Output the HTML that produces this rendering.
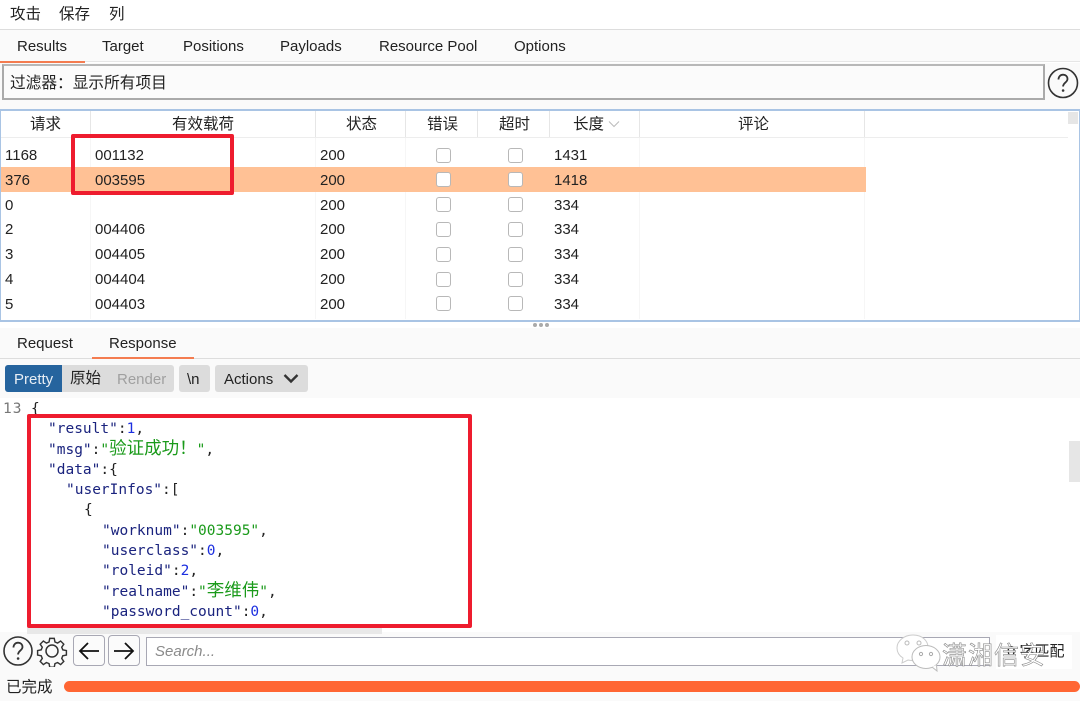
<!DOCTYPE html>
<html><head><meta charset="utf-8">
<style>
html,body{margin:0;padding:0;background:#fff}
#p{position:relative;width:1080px;height:701px;overflow:hidden;background:#fff;font-family:"Liberation Sans","Noto Sans CJK SC",sans-serif;font-size:15px;color:#222}
#p div{position:absolute}
.t{white-space:nowrap;line-height:20px;height:20px;margin-top:1px}
.h{font-size:15.5px}
.cb{width:13px;height:13px;border:1.5px solid #b8b8b8;border-radius:3px;background:#fff}
.sep{width:1px;background:#e6e6e6;top:111px;height:26px}
.sb{width:1px;background:#f6f6f6;top:138px;height:181px}
.c{font-family:"DejaVu Sans Mono","Noto Sans CJK SC",monospace;font-size:14.5px;line-height:20px;white-space:pre;color:#222}
.k{color:#1a237e}.n{color:#1c2fe0}.s{color:#1a9a1a}
.w{font-family:"Noto Sans CJK SC",sans-serif;font-size:17.5px;line-height:20px}
</style></head><body><div id="p">

<!-- menu -->
<div class="t h" style="left:10px;top:4px">攻击</div>
<div class="t h" style="left:59px;top:4px">保存</div>
<div class="t h" style="left:109px;top:4px">列</div>

<!-- tab bar -->
<div style="left:0;top:29px;width:1080px;height:32px;background:#fafafa;border-top:1px solid #ddd"></div>
<div style="left:85px;top:61px;width:995px;height:1px;background:#e6e6e6"></div>
<div style="left:0;top:61px;width:85px;height:2px;background:#f47c50"></div>
<div class="t" style="left:17px;top:36px">Results</div>
<div class="t" style="left:102px;top:36px">Target</div>
<div class="t" style="left:183px;top:36px">Positions</div>
<div class="t" style="left:280px;top:36px">Payloads</div>
<div class="t" style="left:379px;top:36px">Resource Pool</div>
<div class="t" style="left:514px;top:36px">Options</div>

<!-- filter -->
<div style="left:0;top:63px;width:1080px;height:46px;background:#fafafa"></div>
<div style="left:2px;top:64px;width:1043px;height:36px;box-sizing:border-box;border:2px solid #aaa;border-top-color:#b8b8b8;background:#fbfbfb"></div>
<div class="t" style="left:10px;top:73px;font-size:15.7px">过滤器：显示所有项目</div>
<svg style="position:absolute;left:1047px;top:67px" width="32" height="32" viewBox="0 0 32 32"><circle cx="16" cy="16" r="14.5" fill="none" stroke="#333" stroke-width="1.6"/><path d="M11.5 12.500c0-3 2-4.800 4.600-4.800s4.400 1.800 4.400 4.200c0 3.600-4.400 3.800-4.400 7.600" fill="none" stroke="#333" stroke-width="1.800"/><circle cx="16.100" cy="23.500" r="1.300" fill="#333"/></svg>

<!-- table -->
<div style="left:0;top:109px;width:1080px;height:213px;box-sizing:border-box;border:solid #a9c4e4;border-width:2px 1px 2px 1px;background:#fff"></div>
<div style="left:1068px;top:112px;width:10px;height:12px;background:#e6e6e6"></div>
<div style="left:1px;top:137px;width:1067px;height:1px;background:#ededed"></div>
<div class="sep" style="left:90px"></div>
<div class="sep" style="left:315px"></div>
<div class="sep" style="left:405px"></div>
<div class="sep" style="left:477px"></div>
<div class="sep" style="left:549px"></div>
<div class="sep" style="left:639px"></div>
<div class="sep" style="left:864px"></div>
<div class="sb" style="left:90px"></div>
<div class="sb" style="left:315px"></div>
<div class="sb" style="left:405px"></div>
<div class="sb" style="left:639px"></div>
<div class="sb" style="left:864px"></div>
<div style="left:1px;top:167px;width:865px;height:25px;background:#ffc195"></div>

<div class="t h" style="left:30px;top:114px">请求</div>
<div class="t h" style="left:172px;top:114px">有效载荷</div>
<div class="t h" style="left:346px;top:114px">状态</div>
<div class="t h" style="left:427px;top:114px">错误</div>
<div class="t h" style="left:499px;top:114px">超时</div>
<div class="t h" style="left:573px;top:114px">长度</div>
<svg style="position:absolute;left:608px;top:120px" width="12" height="8" viewBox="0 0 12 8"><path d="M1 1.500l5 5 5-5" fill="none" stroke="#bbb" stroke-width="1"/></svg>
<div class="t h" style="left:738px;top:114px">评论</div>

<!-- row 1 -->
<div class="t" style="left:5px;top:145px">1168</div><div class="t" style="left:95px;top:145px">001132</div><div class="t" style="left:320px;top:145px">200</div><div class="cb" style="left:436px;top:148px"></div><div class="cb" style="left:508px;top:148px"></div><div class="t" style="left:554px;top:145px">1431</div>
<!-- row 2 -->
<div class="t" style="left:5px;top:170px">376</div><div class="t" style="left:95px;top:170px">003595</div><div class="t" style="left:320px;top:170px">200</div><div class="cb" style="left:436px;top:172px"></div><div class="cb" style="left:508px;top:172px"></div><div class="t" style="left:554px;top:170px">1418</div>
<!-- row 3 -->
<div class="t" style="left:5px;top:195px">0</div><div class="t" style="left:320px;top:195px">200</div><div class="cb" style="left:436px;top:197px"></div><div class="cb" style="left:508px;top:197px"></div><div class="t" style="left:554px;top:195px">334</div>
<!-- row 4 -->
<div class="t" style="left:5px;top:219px">2</div><div class="t" style="left:95px;top:219px">004406</div><div class="t" style="left:320px;top:219px">200</div><div class="cb" style="left:436px;top:222px"></div><div class="cb" style="left:508px;top:222px"></div><div class="t" style="left:554px;top:219px">334</div>
<!-- row 5 -->
<div class="t" style="left:5px;top:244px">3</div><div class="t" style="left:95px;top:244px">004405</div><div class="t" style="left:320px;top:244px">200</div><div class="cb" style="left:436px;top:247px"></div><div class="cb" style="left:508px;top:247px"></div><div class="t" style="left:554px;top:244px">334</div>
<!-- row 6 -->
<div class="t" style="left:5px;top:269px">4</div><div class="t" style="left:95px;top:269px">004404</div><div class="t" style="left:320px;top:269px">200</div><div class="cb" style="left:436px;top:272px"></div><div class="cb" style="left:508px;top:272px"></div><div class="t" style="left:554px;top:269px">334</div>
<!-- row 7 -->
<div class="t" style="left:5px;top:294px">5</div><div class="t" style="left:95px;top:294px">004403</div><div class="t" style="left:320px;top:294px">200</div><div class="cb" style="left:436px;top:296px"></div><div class="cb" style="left:508px;top:296px"></div><div class="t" style="left:554px;top:294px">334</div>

<!-- red box top -->
<div style="left:71px;top:134px;width:163px;height:61px;box-sizing:border-box;border:4px solid #ee1c2e;border-radius:2px"></div>

<!-- splitter dots -->
<div style="left:533px;top:323px;width:4px;height:4px;border-radius:2px;background:#aaa"></div>
<div style="left:539px;top:323px;width:4px;height:4px;border-radius:2px;background:#aaa"></div>
<div style="left:545px;top:323px;width:4px;height:4px;border-radius:2px;background:#aaa"></div>

<!-- req/resp tabs -->
<div style="left:0;top:328px;width:1080px;height:30px;background:#fafafa"></div>
<div style="left:0;top:358px;width:1080px;height:39px;background:#fafafa;border-top:1px solid #ddd"></div>
<div style="left:92px;top:357px;width:102px;height:2px;background:#f47c50"></div>
<div class="t" style="left:17px;top:333px">Request</div>
<div class="t" style="left:109px;top:333px">Response</div>

<!-- buttons -->
<div style="left:5px;top:365px;width:169px;height:27px;background:#dcdcdc;border-radius:3px"></div>
<div style="left:5px;top:365px;width:57px;height:27px;background:#26649e;border-radius:3px 0 0 3px"></div>
<div class="t" style="left:14px;top:369px;color:#e8eef5">Pretty</div>
<div class="t h" style="left:70px;top:368px">原始</div>
<div class="t" style="left:117px;top:369px;color:#a0a0a0">Render</div>
<div style="left:179px;top:365px;width:31px;height:27px;background:#dcdcdc;border-radius:3px"></div>
<div class="t" style="left:187px;top:369px">\n</div>
<div style="left:215px;top:365px;width:93px;height:27px;background:#dcdcdc;border-radius:3px"></div>
<div class="t" style="left:224px;top:369px">Actions</div>
<svg style="position:absolute;left:283px;top:373px" width="16" height="11" viewBox="0 0 16 11"><path d="M1.500 2l6.500 6.500L14.500 2" fill="none" stroke="#333" stroke-width="2.400"/></svg>

<!-- code -->
<div class="c" style="left:3px;top:399px;color:#777;letter-spacing:1px">13</div>
<div class="c" style="left:31px;top:399px">{</div>
<div class="c" style="left:48px;top:419px"><span class="k">"result"</span>:<span class="n">1</span>,</div>
<div class="c" style="left:48px;top:438px"><span class="k">"msg"</span>:<span class="s">"<span class="w">验证成功！</span>"</span>,</div>
<div class="c" style="left:48px;top:460px"><span class="k">"data"</span>:{</div>
<div class="c" style="left:66px;top:480px"><span class="k">"userInfos"</span>:[</div>
<div class="c" style="left:84px;top:500px">{</div>
<div class="c" style="left:102px;top:521px"><span class="k">"worknum"</span>:<span class="s">"003595"</span>,</div>
<div class="c" style="left:102px;top:541px"><span class="k">"userclass"</span>:<span class="n">0</span>,</div>
<div class="c" style="left:102px;top:561px"><span class="k">"roleid"</span>:<span class="n">2</span>,</div>
<div class="c" style="left:102px;top:580px"><span class="k">"realname"</span>:<span class="s">"<span class="w">李维伟</span>"</span>,</div>
<div class="c" style="left:102px;top:602px"><span class="k">"password_count"</span>:<span class="n">0</span>,</div>

<!-- code scrollbar -->
<div style="left:1069px;top:441px;width:11px;height:41px;background:#e6e6e6"></div>

<!-- bottom bar -->
<div style="left:0;top:632px;width:1080px;height:69px;background:#fafafa"></div>
<div style="left:27px;top:624px;width:355px;height:10px;background:#e8e8e8"></div>
<div style="left:27px;top:414px;width:445px;height:214px;box-sizing:border-box;border:4px solid #ee1c2e;border-radius:2px"></div>

<svg style="position:absolute;left:2px;top:635px" width="32" height="32" viewBox="0 0 32 32"><circle cx="16" cy="16" r="14" fill="none" stroke="#333" stroke-width="1.600"/><path d="M11.500 12.500c0-3 2-4.800 4.600-4.800s4.400 1.800 4.400 4.200c0 3.600-4.400 3.800-4.400 7.600" fill="none" stroke="#333" stroke-width="1.800"/><circle cx="16.100" cy="23.500" r="1.300" fill="#333"/></svg>
<svg style="position:absolute;left:36px;top:635px" width="32" height="32" viewBox="0 0 32 32"><circle cx="16" cy="16" r="6" fill="none" stroke="#333" stroke-width="1.500"/><path d="M13.500 2h5l.8 4 2.900 1.200 3.400-2.300 3.500 3.500-2.300 3.400 1.200 2.900 4 .8v5l-4 .8-1.200 2.900 2.300 3.400-3.500 3.500-3.400-2.300-2.900 1.200-.8 4h-5l-.8-4-2.900-1.200-3.400 2.300-3.500-3.500 2.300-3.400-1.200-2.900-4-.8v-5l4-.8 1.200-2.900-2.300-3.400 3.500-3.500 3.400 2.300 2.900-1.200z" transform="translate(1.600 1.600) scale(.9)" fill="none" stroke="#333" stroke-width="1.600"/></svg>
<div style="left:73px;top:635px;width:32px;height:31px;box-sizing:border-box;border:1px solid #a8a8b4;border-radius:4px;background:#fbfbfb"></div>
<svg style="position:absolute;left:78px;top:640px" width="22" height="22" viewBox="0 0 22 22"><path d="M21 11H2M10 3l-8 8 8 8" fill="none" stroke="#111" stroke-width="1.800"/></svg>
<div style="left:108px;top:635px;width:32px;height:31px;box-sizing:border-box;border:1px solid #a8a8b4;border-radius:4px;background:#fbfbfb"></div>
<svg style="position:absolute;left:113px;top:640px" width="22" height="22" viewBox="0 0 22 22"><path d="M1 11h19M12 3l8 8-8 8" fill="none" stroke="#111" stroke-width="1.800"/></svg>
<div style="left:146px;top:637px;width:844px;height:29px;box-sizing:border-box;border:1px solid #a8a8b4;background:#fff"></div>
<div class="t" style="left:155px;top:641px;font-style:italic;color:#8a8a8a">Search...</div>

<div style="left:996px;top:635px;width:76px;height:34px;background:#fff"></div>
<div class="t" style="left:1007px;top:641px;color:#222">0 字匹配</div>

<!-- watermark -->
<svg style="position:absolute;left:892px;top:632px" width="52" height="40" viewBox="0 0 52 40"><path d="M21 3c-9 0-16 6-16 13 0 4 2 7.500 6 10l-1 5 6-3c1.500.4 3 .5 5 .5 9 0 15-6 15-13S30 3 21 3z" fill="#fff" stroke="#ccc" stroke-width="1"/><ellipse cx="34" cy="25" rx="14" ry="11.500" fill="#fff" stroke="#bbb" stroke-width="1"/><path d="M40 35l5 4-.5-6" fill="#fff" stroke="#bbb"/><circle cx="15" cy="11" r="2" fill="#fff" stroke="#bbb"/><circle cx="27" cy="11" r="2" fill="#fff" stroke="#bbb"/><circle cx="29" cy="22" r="1.600" fill="#fff" stroke="#aaa"/><circle cx="39" cy="22" r="1.600" fill="#fff" stroke="#aaa"/></svg>
<div class="t" style="left:942px;top:638px;font-size:25px;line-height:30px;height:30px;letter-spacing:1px;color:#fff;-webkit-text-stroke:.6px #888;font-family:'Noto Sans CJK SC',sans-serif">潇湘信安</div>

<!-- status -->
<div class="t h" style="left:6px;top:677px">已完成</div>
<div style="left:64px;top:681px;width:1016px;height:11px;background:#ff6633;border-radius:6px"></div>

</div></body></html>
